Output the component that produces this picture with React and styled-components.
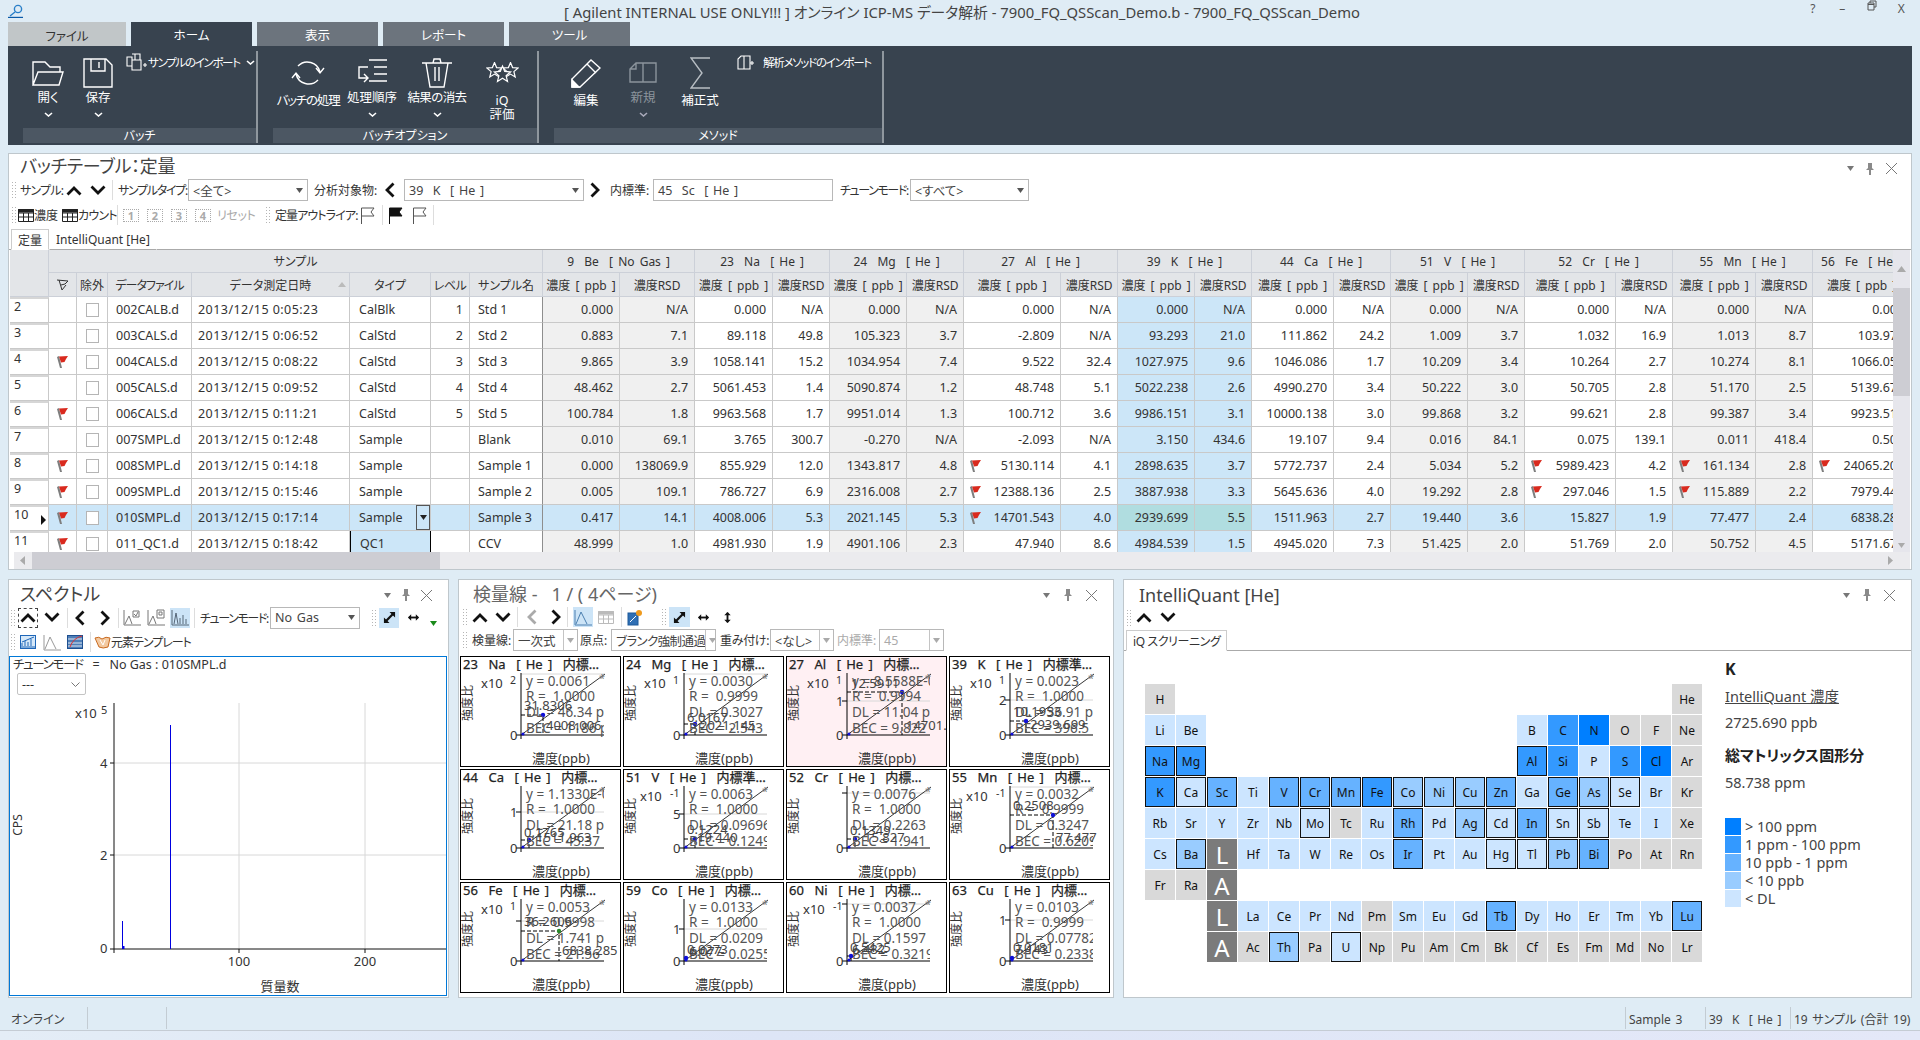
import React from 'react';
import styled, { createGlobalStyle } from 'styled-components';

const Global = createGlobalStyle`
  html, body { margin: 0; padding: 0; background: #dfecf5; }
  * { box-sizing: border-box; }
  body { font-family: "Noto Sans", "Noto Sans CJK JP", sans-serif; font-size: 12.5px; color: #333; font-feature-settings: "palt"; }
`;

const Page = styled.div`
  width: 1920px; height: 1040px; overflow: hidden; display: flex; flex-direction: column; background: #dfecf5;
`;

/* ---------- title bar ---------- */
const TitleBar = styled.div`
  height: 22px; display: grid; grid-template-columns: 1fr auto 1fr; align-items: center; padding: 1px 4px 0 8px;
`;
const TitleText = styled.div` font-size: 14.8px; color: #444; white-space: pre; `;
const WinControls = styled.div` display: flex; justify-content: flex-end; margin-top: -6px; `;
const WinBtn = styled.span` width: 29.5px; text-align: center; font-size: 12px; color: #555; `;

/* ---------- ribbon ---------- */
const TabRow = styled.div` height: 24px; display: flex; gap: 5px; padding-left: 8px; `;
const RibbonTab = styled.div`
  width: ${p => p.$w}px; display: flex; align-items: center; justify-content: center; font-size: 12.5px;
  padding-top: ${p => p.$file ? 3 : 0}px;
  background: ${p => p.$file ? '#c1c6c8' : p.$active ? '#38434f' : '#6c747d'};
  color: ${p => p.$file ? '#333' : '#fff'};
`;
const Ribbon = styled.div` height: 99px; margin: 0 8px; background: #38434f; display: flex; padding-top: 5px; `;
const RibbonGroup = styled.div`
  width: ${p => p.$w}px; margin-left: ${p => p.$ml}px; display: flex; flex-direction: column; height: 92px;
  border-right: 2px solid #8f979e; flex: none;
`;
const RibbonItems = styled.div` flex: 1; display: flex; `;
const RibbonLabel = styled.div`
  height: 15px; background: #4c5763; color: #fff; font-size: 12px; line-height: 15px; text-align: center;
`;
const RibbonBtn = styled.div`
  width: ${p => p.$w}px; flex: none; display: flex; flex-direction: column; align-items: center;
  color: ${p => p.$off ? '#8d959d' : '#fff'}; font-size: 12.5px; line-height: 14px; white-space: nowrap;
  letter-spacing: ${p => p.$k || 0}px;
`;
const IconSlot = styled.div` height: 33px; margin-top: 5px; display: flex; align-items: center; justify-content: center; flex: none; `;
const BtnText = styled.div` margin-top: ${p => p.$mt ?? 2}px; text-align: center; `;
const SmallBtn = styled.div`
  display: flex; align-items: center; gap: ${p => p.$gap || 0}px; color: #fff; font-size: 11.5px; height: 18px; flex: none;
  margin: 2px 0 0 ${p => p.$ml || 0}px; white-space: nowrap; letter-spacing: -1.3px;
`;
const Svg = styled.svg`
  display: block; flex: none; fill: none; stroke: ${p => p.$c || '#fff'}; stroke-width: ${p => p.$sw || 1.4}; margin-top: ${p => p.$mt || 0}px;
`;

const Chev = ({ mt = 5, ml = 0, c = '#fff' }) => (
  <Svg width="9" height="5" viewBox="0 0 9 5" $sw={1.6} $c={c} $mt={mt} style={{ marginLeft: ml }}><path d="M1 1 L4.5 4 L8 1" /></Svg>
);
const starPts = (cx, cy, r) => {
  const p = [];
  for (let i = 0; i < 10; i++) {
    const rr = i % 2 ? r * 0.45 : r;
    const a = -Math.PI / 2 + i * Math.PI / 5;
    p.push(`${(cx + rr * Math.cos(a)).toFixed(1)},${(cy + rr * Math.sin(a)).toFixed(1)}`);
  }
  return p.join(' ');
};
const Folder = () => <Svg width="32" height="26" viewBox="0 0 32 26"><path d="M1 25 V2 H13 L18 7 H28 V12 M1 25 L6 12 H31 L27 25 Z" /></Svg>;
const Floppy = () => <Svg width="30" height="30" viewBox="0 0 30 30"><path d="M1 1 H23 L29 7 V29 H1 Z M8 1 V13 H22 V1 M16 4 V10" /></Svg>;
const Sync = () => <Svg width="34" height="30" viewBox="0 0 34 30"><path d="M7 8 A13 13 0 0 1 29 14 M25 10 L29 15 L33 10 M27 22 A13 13 0 0 1 5 16 M1 20 L5 15 L9 20" /></Svg>;
const ListIcon = () => <Svg width="31" height="28" viewBox="0 0 31 28"><path d="M12 1 H30 M17 8 H30 M17 15 H30 M12 22 H30 M11 8 H2 V19 H11 M7 15 L11 19 L7 23" /></Svg>;
const Trash = () => <Svg width="30" height="30" viewBox="0 0 30 30"><path d="M0 5 H30 M11 5 L12 1 H18 L19 5 M4 5 L8 29 H22 L26 5 M13 9 V23 M17 9 V23" /></Svg>;
const Stars = () => <Svg width="33" height="22" viewBox="0 0 33 22" $sw={1.2}><polygon points={starPts(8.5, 8.5, 8)} /><polygon points={starPts(24.5, 8.5, 8)} /><polygon points={starPts(16.5, 12.5, 8.5)} fill="#38434f" /></Svg>;
const Pencil = () => <Svg width="30" height="30" viewBox="0 0 30 30"><path d="M1 29 V21 L20 2 L29 10 L9 29 Z M16 6 L25 15" /><path d="M1 29 V22 L8 29 Z" fill="#fff" /></Svg>;
const NewIcon = () => <Svg width="28" height="21" viewBox="0 0 28 21" $c="#8b949c"><path d="M1 20 V7 L7 1 H27 V20 Z M14 1 V20 M1 7 H7 V1" /></Svg>;
const Sigma = () => <Svg width="20" height="32" viewBox="0 0 20 32" $c="#b8bec4"><path d="M20 1 H1 L12 16 L1 31 H20" /></Svg>;
const ImportIcon = () => <Svg width="22" height="18" viewBox="0 0 22 18" $sw={1.1}><path d="M1 4 H6 V13 H1 Z M6 1 H14 V7 H6 M6 7 H15 V17 H6 Z M9 1 V7 M17 12 H21 M19 10 V14" /></Svg>;
const DocPlus = () => <Svg width="18" height="15" viewBox="0 0 18 15" $sw={1.1}><path d="M1 14 V4 L4 1 H13 V14 Z M7 1 V14 M13 8 H17 M15 6 V10" /></Svg>;

/* ---------- panels ---------- */
const Panel = styled.section`
  background: #fff; border: 1px solid #bfc7cc; display: flex; flex-direction: column; position: relative;
  width: ${p => p.$w ? `${p.$w}px` : 'auto'}; height: 419px; flex: ${p => p.$w ? 'none' : '1'};
  margin: ${p => p.$mx ? `${p.$mt || 0}px ${p.$mx}px 0` : 0};
`;
const PanelTop = styled.div` height: ${p => p.$h}px; display: flex; align-items: center; justify-content: space-between; flex: none; `;
const PanelTitle = styled.div`
  font-size: 18px; color: ${p => p.$c || '#444'}; padding-left: ${p => p.$pl}px; white-space: pre; margin-top: ${p => p.$mt || 0}px;
  letter-spacing: ${p => p.$k || 0}px;
`;
const PanelCtrls = styled.div` display: flex; align-items: center; gap: ${p => p.$gap || 13}px; padding-right: ${p => p.$pr}px; margin-top: ${p => p.$mt || 0}px; `;
const Controls = ({ pr, gap, mt }) => (
  <PanelCtrls $pr={pr} $gap={gap} $mt={mt}>
    <Svg width="7" height="5" viewBox="0 0 7 5" $c="none"><path d="M0 0 H7 L3.5 5 Z" fill="#777" /></Svg>
    <Svg width="8" height="12" viewBox="0 0 8 12" $c="none"><path d="M2 0 H6 V5 L8 7 H5 V12 H3 V7 H0 L2 5 Z" fill="#8a8a8a" /></Svg>
    <Svg width="11" height="11" viewBox="0 0 11 11" $c="#777" $sw={1}><path d="M0 0 L11 11 M11 0 L0 11" /></Svg>
  </PanelCtrls>
);

/* ---------- toolbars ---------- */
const Toolbar = styled.div`
  height: ${p => p.$h}px; display: flex; align-items: center; padding-left: ${p => p.$pl ?? 2}px; flex: none;
`;
const Grip = styled.div`
  width: 6px; height: 18px; flex: none; margin-left: ${p => p.$ml || 0}px;
  background-image: radial-gradient(#b5b5b5 0.9px, transparent 1px); background-size: 3px 3px;
`;
const ToolLabel = styled.div`
  width: ${p => p.$w}px; margin-left: ${p => p.$ml || 0}px; white-space: nowrap; font-size: 12px; flex: none;
  color: ${p => p.$off ? '#aaa' : '#333'}; letter-spacing: ${p => p.$k || 0}px;
`;
const ToolBtn = styled.div`
  width: ${p => p.$w}px; height: ${p => p.$h || 20}px; margin-left: ${p => p.$ml || 0}px; flex: none;
  display: flex; align-items: ${p => p.$low ? 'flex-end' : 'center'}; justify-content: center;
  padding-bottom: ${p => p.$low ? 2 : 0}px;
  background: ${p => p.$on ? '#cce4f7' : 'transparent'};
  border: ${p => p.$dash ? '1px dashed #444' : 'none'};
`;
const ToolSep = styled.div` width: 1px; height: 20px; background: #ddd; flex: none; margin-left: ${p => p.$ml}px; `;
const Combo = styled.div`
  width: ${p => p.$w}px; height: 22px; margin-left: ${p => p.$ml || 0}px; flex: none; word-spacing: 1.5px; letter-spacing: ${p => p.$k || 0}px;
  border: 1px solid #b8b8b8; background: #fff; display: flex; align-items: center; padding-left: 4px;
  font-size: 12.5px; white-space: pre; color: ${p => p.$off ? '#aaa' : '#444'}; position: relative; overflow: hidden;
`;
const ComboArrow = styled.span`
  margin-left: auto; width: ${p => p.$split ? 14 : 16}px; height: 100%; display: flex; align-items: center; justify-content: center; flex: none;
  border-left: ${p => p.$split ? '1px solid #c4c4c4' : 'none'};
`;
const Tri = ({ c = '#555' }) => <Svg width="7" height="5" viewBox="0 0 7 5" $c="none"><path d="M0 0 H7 L3.5 5 Z" fill={c} /></Svg>;
const Up = ({ c = '#111' }) => <Svg width="16" height="11" viewBox="0 0 16 11" $c={c} $sw={2.8}><path d="M1.5 9.5 L8 3 L14.5 9.5" /></Svg>;
const Down = ({ c = '#111' }) => <Svg width="16" height="11" viewBox="0 0 16 11" $c={c} $sw={2.8}><path d="M1.5 1.5 L8 8 L14.5 1.5" /></Svg>;
const Left = ({ c = '#111' }) => <Svg width="11" height="16" viewBox="0 0 11 16" $c={c} $sw={2.8}><path d="M9.5 1.5 L3 8 L9.5 14.5" /></Svg>;
const Right = ({ c = '#111' }) => <Svg width="11" height="16" viewBox="0 0 11 16" $c={c} $sw={2.8}><path d="M1.5 1.5 L8 8 L1.5 14.5" /></Svg>;
const GridIcon = ({ c = '#222' }) => <Svg width="16" height="13" viewBox="0 0 16 13" $c={c} $sw={1}><path d="M.5 .5 H15.5 V12.5 H.5 Z M.5 4 H15.5 M.5 8 H15.5 M5.5 4 V12.5 M10.5 4 V12.5" /><path d="M.5 .5 H15.5 V3 H.5 Z" fill={c} /></Svg>;
const NumBox = styled.div`
  width: 16px; height: 13px; border: 1px dotted #aaa; font-size: 11px; color: #aaa; font-weight: 700;
  display: flex; align-items: center; justify-content: center; line-height: 1;
`;
const NumIcon = ({ n }) => <NumBox>{n}</NumBox>;
const FlagOutline = ({ fill, c = '#555' }) => (
  <Svg width="16" height="18" viewBox="0 0 16 18" $c={c} $sw={1}><path d="M1.5 18 V2 H14 L11 6 L14 10 H1.5" fill={fill || 'none'} /></Svg>
);
const Updown = ({ dir }) => (
  <Svg width="13" height="13" viewBox="0 0 14 14" $c="#111" $sw={2} transform={dir === 'v' ? 'rotate(90)' : undefined}>
    <path d="M2 7 H12" /><path d="M4.5 3.5 L1 7 L4.5 10.5 Z M9.5 3.5 L13 7 L9.5 10.5 Z" fill="#111" stroke="none" />
  </Svg>
);
const Diag = () => (
  <Svg width="13" height="13" viewBox="0 0 14 14" $c="#111" $sw={2.4}>
    <path d="M3 11 L11 3" /><path d="M7 1 H13 V7 Z M1 7 V13 H7 Z" fill="#111" stroke="none" />
  </Svg>
);
const ChartGlyph = ({ variant, c = '#777' }) => (
  <Svg width="18" height="17" viewBox="0 0 18 17" $c={c} $sw={1}>
    <path d="M1 1 V16 H18" />
    {variant === 'a' && <path d="M2 15 L6 7 L9 15 M10 2 H16 V8 H10 Z M11 5 L13 7 L15 3" />}
    {variant === 'b' && <path d="M2 15 L6 7 L9 15 M10 1 H17 V9 H10 Z M12 3 H15 V6 H12 Z" />}
    {variant === 'c' && <path d="M3 15 L5 4 L7 15 M9 15 V9 M12 15 V6 M15 15 V10" />}
    {variant === 'd' && <path d="M2 15 L7 3 L13 15" />}
  </Svg>
);

/* ---------- tabs inside panels ---------- */
const InnerTabs = styled.div`
  height: ${p => p.$h || 21}px; display: flex; align-items: flex-end; padding-left: ${p => p.$pl}px; border-bottom: 1px solid #aaa; flex: none;
`;
const InnerTab = styled.div`
  height: 21px; padding: 0 ${p => p.$px ?? 7}px; display: flex; align-items: center; font-size: 12px; color: #333; white-space: nowrap;
  margin-bottom: -1px; background: #fff; letter-spacing: ${p => p.$k || 0}px;
  border: ${p => p.$active ? '1px solid #ccc' : '1px solid transparent'}; border-bottom: ${p => p.$active ? '1px solid #fff' : '1px solid #aaa'};
`;

/* ---------- batch table ---------- */
const TableArea = styled.div` height: 302px; display: flex; flex: none; padding-left: 1px; `;
const TableClip = styled.div` width: 1883px; height: 302px; overflow: hidden; flex: none; `;
const Grid = styled.table`
  border-collapse: separate; border-spacing: 0; table-layout: fixed; width: 1901px; font-size: 12.5px; color: #333;
`;
const Th = styled.th`
  background: #e3e5e8; border-right: 1px solid #ccd0d8; border-bottom: 1px solid #ccd0d8; font-weight: 400; font-size: 12px;
  height: ${p => p.$h}px; padding: 0; white-space: pre; overflow: hidden; position: relative; color: #333; word-spacing: 2px;
  letter-spacing: ${p => p.$k || 0}px;
`;
const SortMark = styled.span`
  position: absolute; right: 3px; top: 9px; width: 0; height: 0;
  border-left: 4px solid transparent; border-right: 4px solid transparent; border-bottom: 5px solid #bbb;
`;
const Td = styled.td`
  height: 26px; padding: 0 ${p => p.$pr ?? 6}px 0 ${p => p.$pl ?? 6}px; text-align: ${p => p.$r ? 'right' : 'left'};
  background: ${p => p.$bg || '#fff'}; white-space: nowrap; overflow: hidden;
  border-right: 1px solid ${p => p.$edge || '#c9c9c9'}; border-bottom: 1px solid #c9c9c9;
  border-left: ${p => p.$focus ? '1px solid #000' : 'none'};
  ${p => p.$focus ? 'border-right: 1px solid #000;' : ''}
  letter-spacing: ${p => p.$ls || 0}px; position: relative;
`;
const RowHead = styled.td`
  height: 26px; background: #fff; padding: 0 0 0 4px; vertical-align: top; font-size: 12.5px; border-top: 2px solid #d6d6d6;
  border-right: 1px solid #c9c9c9; border-bottom: 1px solid #c9c9c9; position: relative; line-height: 15px;
`;
const RowPointer = styled.span`
  position: absolute; right: 2px; top: 8px; width: 0; height: 0;
  border-top: 5px solid transparent; border-bottom: 5px solid transparent; border-left: 5px solid #111;
`;
const CheckBox = styled.div` width: 13px; height: 14px; border: 1px solid #b5b5b5; background: #fff; margin: 0 auto; `;
const ValueRow = styled.div` display: flex; align-items: center; justify-content: space-between; `;
const DropBtn = styled.span`
  position: absolute; right: 0; top: 0; bottom: 0; width: 14px; border: 1px solid #555; background: #cce6f8;
  display: flex; align-items: center; justify-content: center;
`;
const CenterCell = styled.div` display: flex; justify-content: center; `;
const FlagIcon = () => (
  <Svg width="13" height="14" viewBox="0 0 13 14" $c="none">
    <path d="M1 2 L3 1 L6 13 L4 13 Z" fill="#7e7e7e" />
    <path d="M3 1.5 L12 1 L10 4 L8.5 7 L5 7.5 Z" fill="#d92a1e" />
  </Svg>
);
const VScroll = styled.div` width: 17px; height: 302px; background: #e6e6ec; display: flex; flex-direction: column; align-items: center; flex: none; `;
const ScrollArrow = styled.div`
  height: ${p => p.$h}px; width: ${p => p.$w ? `${p.$w}px` : '100%'}; display: flex; flex: ${p => p.$w ? 'none' : '1'};
  align-items: ${p => p.$end ? 'flex-end' : 'center'}; justify-content: ${p => p.$right ? 'flex-end' : 'center'};
  padding-bottom: ${p => p.$end ? 4 : 0}px; padding-right: ${p => p.$right ? 17 : 0}px;
`;
const VThumb = styled.div` width: 100%; height: 108px; background: #cdcdd3; flex: none; `;
const HScroll = styled.div` height: 17px; margin-left: 5px; margin-right: 1px; background: #ebebee; display: flex; align-items: center; flex: none; `;
const HThumb = styled.div` width: 408px; height: 100%; background: #cdcdd3; flex: none; margin-left: 1px; `;

const samples = [
  [2, 0, '002CALB.d', '0:05:23', 'CalBlk', 1, 'Std 1'],
  [3, 0, '003CALS.d', '0:06:52', 'CalStd', 2, 'Std 2'],
  [4, 1, '004CALS.d', '0:08:22', 'CalStd', 3, 'Std 3'],
  [5, 0, '005CALS.d', '0:09:52', 'CalStd', 4, 'Std 4'],
  [6, 1, '006CALS.d', '0:11:21', 'CalStd', 5, 'Std 5'],
  [7, 0, '007SMPL.d', '0:12:48', 'Sample', '', 'Blank'],
  [8, 1, '008SMPL.d', '0:14:18', 'Sample', '', 'Sample 1'],
  [9, 1, '009SMPL.d', '0:15:46', 'Sample', '', 'Sample 2'],
  [10, 1, '010SMPL.d', '0:17:14', 'Sample', '', 'Sample 3'],
  [11, 1, '011_QC1.d', '0:18:42', 'QC1', '', 'CCV'],
];
const analytes = [
  { name: '9  Be  [ No Gas ]', tone: 'g', w: [77, 75], vals: ['0.000 N/A', '0.883 7.1', '9.865 3.9', '48.462 2.7', '100.784 1.8', '0.010 69.1', '0.000 138069.9', '0.005 109.1', '0.417 14.1', '48.999 1.0'] },
  { name: '23  Na  [ He ]', tone: 'w', w: [78, 57], vals: ['0.000 N/A', '89.118 49.8', '1058.141 15.2', '5061.453 1.4', '9963.568 1.7', '3.765 300.7', '855.929 12.0', '786.727 6.9', '4008.006 5.3', '4981.930 1.9'] },
  { name: '24  Mg  [ He ]', tone: 'g', w: [77, 57], vals: ['0.000 N/A', '105.323 3.7', '1034.954 7.4', '5090.874 1.2', '9951.014 1.3', '-0.270 N/A', '1343.817 4.8', '2316.008 2.7', '2021.145 5.3', '4901.106 2.3'] },
  { name: '27  Al  [ He ]', tone: 'w', w: [97, 57], vals: ['0.000 N/A', '-2.809 N/A', '9.522 32.4', '48.748 5.1', '100.712 3.6', '-2.093 N/A', '!5130.114 4.1', '!12388.136 2.5', '!14701.543 4.0', '47.940 8.6'] },
  { name: '39  K  [ He ]', tone: 's', w: [77, 57], vals: ['0.000 N/A', '93.293 21.0', '1027.975 9.6', '5022.238 2.6', '9986.151 3.1', '3.150 434.6', '2898.635 3.7', '3887.938 3.3', '2939.699 5.5', '4984.539 1.5'] },
  { name: '44  Ca  [ He ]', tone: 'w', w: [82, 57], vals: ['0.000 N/A', '111.862 24.2', '1046.086 1.7', '4990.270 3.4', '10000.138 3.0', '19.107 9.4', '5772.737 2.4', '5645.636 4.0', '1511.963 2.7', '4945.020 7.3'] },
  { name: '51  V  [ He ]', tone: 'g', w: [77, 57], vals: ['0.000 N/A', '1.009 3.7', '10.209 3.4', '50.222 3.0', '99.868 3.2', '0.016 84.1', '5.034 5.2', '19.292 2.8', '19.440 3.6', '51.425 2.0'] },
  { name: '52  Cr  [ He ]', tone: 'w', w: [91, 57], vals: ['0.000 N/A', '1.032 16.9', '10.264 2.7', '50.705 2.8', '99.621 2.8', '0.075 139.1', '!5989.423 4.2', '!297.046 1.5', '15.827 1.9', '51.769 2.0'] },
  { name: '55  Mn  [ He ]', tone: 'g', w: [83, 57], vals: ['0.000 N/A', '1.013 8.7', '10.274 8.1', '51.170 2.5', '99.387 3.4', '0.011 418.4', '!161.134 2.8', '!115.889 2.2', '77.477 2.4', '50.752 4.5'] },
  { name: '56  Fe  [ He ]', tone: 'w', w: [98], vals: ['0.000', '103.971', '1066.053', '5139.671', '9923.512', '0.506', '!24065.203', '7979.442', '6838.285', '5171.671'] },
];
const SEL = '#cce6f8';
const cellBg = (tone, rowIdx) => {
  if (rowIdx === 8) return tone === 's' ? '#b0dde0' : SEL;
  return tone === 'g' ? '#f0f0f0' : tone === 's' ? SEL : '#fff';
};

const BatchTable = () => (
  <Grid>
    <colgroup>
      {[39, 28, 31, 84, 158, 81, 39, 73].map((w, i) => <col key={i} style={{ width: w }} />)}
      {analytes.flatMap(a => a.w).map((w, i) => <col key={`a${i}`} style={{ width: w }} />)}
    </colgroup>
    <thead>
      <tr>
        <Th $h={23} rowSpan={2} />
        <Th $h={23} colSpan={7}>サンプル</Th>
        {analytes.map(a => <Th key={a.name} $h={23} colSpan={a.w.length}>{a.name}</Th>)}
      </tr>
      <tr>
        <Th $h={24}><CenterCell><Svg width="13" height="12" viewBox="0 0 13 12" $c="#333" $sw={1}><path d="M1 1 L12 2 L9 5 L5 6 M3 1 L6 11 L10 6" /></Svg></CenterCell></Th>
        <Th $h={24}>除外</Th>
        <Th $h={24} $k={-1}>データファイル</Th>
        <Th $h={24}>データ測定日時<SortMark /></Th>
        <Th $h={24}>タイプ</Th>
        <Th $h={24} $k={-0.5}>レベル</Th>
        <Th $h={24}>サンプル名</Th>
        {analytes.flatMap(a => [
          <Th key={`${a.name}c`} $h={24}>濃度 [ ppb ]</Th>,
          a.w.length > 1 ? <Th key={`${a.name}r`} $h={24}>濃度RSD</Th> : null,
        ])}
      </tr>
    </thead>
    <tbody>
      {samples.map((s, r) => {
        const rowBg = r === 8 ? SEL : undefined;
        return (
          <tr key={s[0]}>
            <RowHead>{s[0]}{r === 8 && <RowPointer />}</RowHead>
            <Td $bg={rowBg} $pl={7} $pr={0}>{s[1] ? <FlagIcon /> : null}</Td>
            <Td $bg={rowBg} $pl={0} $pr={0}><CheckBox /></Td>
            <Td $bg={rowBg} $pl={8} $pr={0}>{s[2]}</Td>
            <Td $bg={rowBg} $pl={6} $pr={0} $ls={0.45}>2013/12/15 {s[3]}</Td>
            <Td $bg={r === 8 || r === 9 ? SEL : undefined} $pl={9} $focus={r === 9}>
              {s[4]}{r === 8 && <DropBtn><Tri c="#222" /></DropBtn>}
            </Td>
            <Td $bg={rowBg} $r>{s[5]}</Td>
            <Td $bg={rowBg} $pl={8} $pr={0} $edge="#8e8e8e">{s[6]}</Td>
            {analytes.flatMap(a => {
              const raw = a.vals[r];
              const flag = raw[0] === '!';
              const [v, rsd] = (flag ? raw.slice(1) : raw).split(' ');
              const bg = cellBg(a.tone, r);
              return [
                <Td key={`${a.name}c`} $bg={bg} $r $pl={5}>
                  {flag ? <ValueRow><FlagIcon /><span>{v}</span></ValueRow> : v}
                </Td>,
                rsd ? <Td key={`${a.name}r`} $bg={bg} $r $pl={0}>{rsd}</Td> : null,
              ];
            })}
          </tr>
        );
      })}
    </tbody>
  </Grid>
);

/* ---------- bottom ---------- */
const BottomRow = styled.div` display: flex; gap: 9px; padding: 0 8px; margin-top: 9px; flex: none; `;
const SpectrumFrame = styled.div`
  height: 340px; margin-top: 2px; border: 1px solid #0078d7; display: flex; flex-direction: column; flex: none; width: 438px;
`;
const SpecInfo = styled.div` height: 16px; line-height: 15px; padding-left: 3px; font-size: 12.5px; color: #333; white-space: pre; flex: none; `;
const Tight = styled.span` letter-spacing: ${p => p.$k}px; `;
const SpecSelect = styled.div`
  width: 69px; height: 22px; margin-left: 7px; border: 1px solid #c4c4c4; border-radius: 2px; display: flex; align-items: center;
  justify-content: space-between; padding: 0 5px 0 4px; font-size: 12.5px; background: #fff; flex: none;
`;
const PlotSvg = styled.svg`
  display: block; flex: none; font-family: "Noto Sans", "Noto Sans CJK JP", sans-serif; font-feature-settings: "palt";
  text { white-space: pre; }
`;

const SpectrumPlot = () => (
  <PlotSvg width="436" height="300" viewBox="9 697 436 300">
    {[765, 857].map(y => <line key={y} x1="113" x2="445" y1={y} y2={y} stroke="#d8d8d8" />)}
    {[238, 364].map(x => <line key={x} x1={x} x2={x} y1="705" y2="951" stroke="#d8d8d8" />)}
    <path d="M113 705 V951 H445 M113 951 V955 M238 951 V955 M364 951 V955 M109 765 H113 M109 857 H113 M109 951 H113" stroke="#111" strokeWidth="1" fill="none" />
    <path d="M169.5 727 V951 M121.5 923 V951" stroke="#0000e0" strokeWidth="1" />
    <path d="M122.5 948 V951" stroke="#0000e0" strokeWidth="2" />
    <g fontSize="13" fill="#333">
      <text x="74" y="720">x10</text>
      <text x="100" y="716" fontSize="11">5</text>
      <text x="99" y="770">4</text>
      <text x="99" y="862">2</text>
      <text x="99" y="955">0</text>
      <text x="238" y="968" textAnchor="middle">100</text>
      <text x="364" y="968" textAnchor="middle">200</text>
      <text x="279" y="993" textAnchor="middle">質量数</text>
      <text transform="translate(21 827) rotate(-90)" textAnchor="middle" fontSize="12">CPS</text>
    </g>
  </PlotSvg>
);

const ChartsGrid = styled.div`
  display: grid; grid-template-columns: repeat(4, 161px); grid-auto-rows: 111px; gap: 2px; padding-left: 1px; margin-top: 5px; flex: none;
`;
const ChartCell = styled.div`
  border: 1px solid #000; background: ${p => p.$pink ? '#fff0f3' : '#fff'}; overflow: hidden; display: flex; flex-direction: column;
`;
const ChartTitle = styled.div`
  height: 16px; font-size: 13px; line-height: 15px; padding-left: 2px; color: #222; white-space: pre; flex: none; -webkit-text-stroke: 0.25px #222; overflow: hidden;
  word-spacing: 1.9px;
`;

const charts = [
  { t: '23  Na  [ He ]  内標…', ex: '2', s: ['y = 0.0061', 'R =  1.0000', 'DL = 46.34 ppb', 'BEC = 1186 ppb'], pt: [83, 59], l1: ['31.8306', 64, 54], l2: ['4008.006', 86, 74], ticks: [] , g: 18},
  { t: '24  Mg  [ He ]  内標…', ex: '1', s: ['y = 0.0030', 'R =  0.9999', 'DL = 0.3027 ppb', 'BEC = 2.543 ppb'], pt: [72, 68], l1: ['6.0167', 64, 66], l2: ['2021.145', 77, 74], ticks: [], g: 18 },
  { t: '27  Al  [ He ]  内標…', ex: '1', pink: true, s: ['y = 8.5588E-0', 'R =  0.9994', 'DL = 11.04 ppb', 'BEC = 9.822 ppb'], pt: [116, 36], l1: ['12.5911', 65, 32], l2: ['14701.5', 120, 74], ticks: [['1', 45]], g: 45 },
  { t: '39  K  [ He ]  内標準…', ex: '1', s: ['y = 0.0023', 'R =  1.0000', 'DL = 36.91 ppb', 'BEC = 396.5 ppb'], pt: [77, 65], l1: ['10.1953', 64, 60], l2: ['2939.699', 81, 73], ticks: [['2', 44]], g: 44 },
  { t: '44  Ca  [ He ]  内標…', s: ['y = 1.1330E-0', 'R =  1.0000', 'DL = 21.18 ppb', 'BEC = 45.37 ppb'], pt: [69, 71], l1: ['0.1765', 64, 68], l2: ['1511.963', 76, 73], ticks: [['1', 43]], g: 43 },
  { t: '51  V  [ He ]  内標準…', ex: '-1', xx: 17, s: ['y = 0.0063', 'R =  1.0000', 'DL = 0.09696 ppb', 'BEC = 0.1249 ppb'], pt: [72, 70], l1: ['0.1224', 64, 65], l2: ['19.440', 74, 73], ticks: [['5', 45]], g: 45 },
  { t: '52  Cr  [ He ]  内標…', s: ['y = 0.0076', 'R =  1.0000', 'DL = 0.2263 ppb', 'BEC = 1.941 ppb'], pt: [69, 70], l1: ['0.1349', 64, 66], l2: ['15.827', 78, 73], ticks: [['', 24]], g: 24 },
  { t: '55  Mn  [ He ]  内標…', ex: '-1', xx: 17, s: ['y = 0.0032', 'R =  0.9999', 'DL = 0.3247 ppb', 'BEC = 0.6209 ppb'], pt: [104, 46], l1: ['0.2508', 64, 41], l2: ['77.477', 107, 73], ticks: [], g: 18 },
  { t: '56  Fe  [ He ]  内標…', ex: '1', green: true, s: ['y = 0.0053', 'R =  0.9998', 'DL = 1.741 ppb', 'BEC = 21.56 ppb'], pt: [99, 49], l1: ['36.2606', 64, 44], l2: ['6838.285', 102, 73], ticks: [['', 39]], g: 39 },
  { t: '59  Co  [ He ]  内標…', s: ['y = 0.0133', 'R =  1.0000', 'DL = 0.0209', 'BEC = 0.0255 ppb'], pt: [63, 76], l1: ['0.0273', 64, 72], l2: ['6.077', 66, 74], ticks: [['1', 47]], g: 47 },
  { t: '60  Ni  [ He ]  内標…', ex: '-1', xx: 17, s: ['y = 0.0037', 'R =  1.0000', 'DL = 0.1597', 'BEC = 0.3219 ppb'], pt: [65, 74], l1: ['0.5425', 64, 70], l2: ['6.482', 66, 72], ticks: [['', 22]], g: 22 },
  { t: '63  Cu  [ He ]  内標…', s: ['y = 0.0103', 'R =  0.9999', 'DL = 0.07782 ppb', 'BEC = 0.2338 ppb'], pt: [63, 76], l1: ['0.0181', 64, 70], l2: ['7.143', 66, 72], ticks: [['1', 38]], g: 38 },
];

const MiniChart = ({ c, i }) => {
  const [px, py] = c.pt;
  return (
    <PlotSvg width="159" height="93" viewBox="1 17 159 93">
      <defs><clipPath id={`clip${i}`}><rect x="61" y="16" width="83" height="65" /></clipPath></defs>
      <line x1="61" x2="144" y1={c.g} y2={c.g} stroke="#d8d8d8" />
      <path d="M61 16 V79 H144" fill="none" stroke="#000" />
      <path d="M61 79 V83 M56 79 H61" stroke="#000" fill="none" />
      <line x1="61" y1="79" x2="145" y2="18" stroke="#000" strokeWidth="0.8" />
      <path d={`M61 ${py} H${px} V79`} fill="none" stroke="#000" strokeDasharray="4 2" />
      <circle cx={px} cy={py} r="2.2" fill={c.green ? '#2a8a2a' : '#1010d8'} />
      <circle cx="63" cy="78" r="1.6" fill="#1010d8" />
      <text x="139" y="26" fontSize="11" fill="#777">*</text>
      <g fontSize="13.5" fill="#555" clipPath={`url(#clip${i})`}>
        <text x="66" y="30">{c.s[0]}</text>
        <text x="66" y="45">{c.s[1]}</text>
        <text x="66" y="61">{c.s[2]}</text>
        <text x="66" y="77">{c.s[3]}</text>
      </g>
      <text x={c.l1[1]} y={c.l1[2]} fontSize="13" fill="#444">{c.l1[0]}</text>
      <text x={c.l2[1]} y={c.l2[2]} fontSize="13" fill="#444">{c.l2[0]}</text>
      <g fontSize="13" fill="#333">
        {c.ex && <text x={c.xx || 21} y="32">x10</text>}
        {c.ex && <text x={c.ex.length > 1 ? 47 : 50} y="28" fontSize="10.5">{c.ex}</text>}
        <text x="50" y="84">0</text>
        {c.ticks.map(([t, y]) => <g key={y}><text x="50" y={y + 5}>{t}</text><line x1="56" x2="61" y1={y} y2={y} stroke="#000" /></g>)}
        <text transform="translate(12 47) rotate(-90)" textAnchor="middle" fontSize="12">強度比</text>
        <text x="101" y="107" textAnchor="middle">濃度(ppb)</text>
      </g>
    </PlotSvg>
  );
};

/* periodic table */
const PTBody = styled.div` display: flex; flex: 1; padding: 0 0 0 21px; `;
const PTGrid = styled.div`
  display: grid; grid-template-columns: repeat(18, 30px); grid-auto-rows: 30px; gap: 1px; margin-top: 33px; flex: none; align-content: start;
`;
const Elem = styled.div`
  background: ${p => p.$bg}; display: flex; align-items: center; justify-content: center; font-size: 12px; color: #111;
  border: ${p => p.$b ? '1px solid #111' : 'none'};
`;
const Series = styled.div`
  background: #7b7b7b; color: #fff; font-size: 24px; display: flex; align-items: center; justify-content: center;
`;
const Side = styled.div` margin-left: 23px; display: flex; flex-direction: column; flex: none; `;
const SideHead = styled.div` font-size: ${p => p.$fs || 15}px; font-weight: 700; line-height: 20px; margin-top: ${p => p.$mt}px; color: #222; `;
const SideText = styled.div`
  font-size: 14.5px; line-height: 18px; margin-top: ${p => p.$mt}px; color: #444; text-decoration: ${p => p.$u ? 'underline' : 'none'};
`;
const Legend = styled.div` margin-top: 26px; display: flex; flex-direction: column; `;
const LegendRow = styled.div` display: flex; align-items: center; height: 18px; font-size: 14.5px; color: #444; gap: 4px; `;
const Swatch = styled.div` width: 16px; height: 17px; background: ${p => p.$bg}; `;

const C = { a: '#007fff', b: '#3399ff', c: '#66b2ff', d: '#99ccff', e: '#cce5ff', x: '#d9d9d9' };
/* each token: Symbol:color[+ for border]; "." empty; "#L"/"#A" dark tiles */
const ptRows = [
  'H:x . . . . . . . . . . . . . . . . He:x',
  'Li:e Be:e . . . . . . . . . . B:e C:b N:a O:x F:x Ne:x',
  'Na:b+ Mg:b+ . . . . . . . . . . Al:b+ Si:b P:e S:b Cl:a Ar:x',
  'K:b+ Ca:e+ Sc:c+ Ti:e V:c+ Cr:c+ Mn:c+ Fe:b+ Co:d+ Ni:d+ Cu:d+ Zn:c+ Ga:e Ge:c+ As:d+ Se:e+ Br:e Kr:x',
  'Rb:e Sr:e Y:e Zr:e Nb:e Mo:e+ Tc:x Ru:e Rh:c+ Pd:e Ag:d+ Cd:e+ In:c+ Sn:e+ Sb:e+ Te:e I:e Xe:x',
  'Cs:e Ba:d+ #L Hf:e Ta:e W:e Re:e Os:e Ir:c+ Pt:e Au:e Hg:e+ Tl:e+ Pb:d+ Bi:c+ Po:x At:x Rn:x',
  'Fr:x Ra:x #A . . . . . . . . . . . . . . .',
  '. . #L La:e Ce:e Pr:e Nd:e Pm:x Sm:e Eu:e Gd:e Tb:c+ Dy:e Ho:e Er:e Tm:e Yb:e Lu:c+',
  '. . #A Ac:x Th:d+ Pa:x U:e+ Np:x Pu:x Am:x Cm:x Bk:x Cf:x Es:x Fm:x Md:x No:x Lr:x',
];
const PeriodicTable = () => (
  <PTGrid>
    {ptRows.flatMap((row, r) => row.split(' ').map((tok, i) => {
      const key = `${r}-${i}`;
      if (tok === '.') return <div key={key} />;
      if (tok[0] === '#') return <Series key={key}>{tok[1]}</Series>;
      const [sym, col] = tok.split(':');
      return <Elem key={key} $bg={C[col[0]]} $b={col[1] === '+'}>{sym}</Elem>;
    }))}
  </PTGrid>
);

/* status bar */
const StatusBar = styled.div` height: 32px; display: flex; align-items: center; flex: none; padding-top: 8px; `;
const StatusCell = styled.div`
  width: ${p => p.$w}px; height: 22px; line-height: 26px; padding-left: ${p => p.$pl ?? 3}px; font-size: 12px; color: #444; white-space: pre; word-spacing: 1.5px;
  border-right: ${p => p.$sep ? '1px solid #c3ccd3' : 'none'}; flex: none; margin-left: ${p => p.$ml || 0}px;
  border-left: ${p => p.$sl ? '1px solid #c3ccd3' : 'none'};
`;
const BottomStrip = styled.div`
  flex: 1; border-top: 1px solid #c5ccd4; background: linear-gradient(90deg, #e4edf6 0%, #dde5f6 40%, #e4e8f8 100%);
`;

const ToolRowTable = () => (
  <>
    <Toolbar $h={22}>
      <Grip />
      <ToolLabel $w={42} $ml={3} $k={-0.8}>サンプル:</ToolLabel>
      <ToolBtn $w={24}><Up /></ToolBtn>
      <ToolBtn $w={24}><Down /></ToolBtn>
      <ToolSep $ml={2} />
      <ToolLabel $w={67} $ml={5} $k={-1.3}>サンプルタイプ:</ToolLabel>
      <Combo $w={120} $ml={3}>{'<全て>'}<ComboArrow><Tri /></ComboArrow></Combo>
      <ToolLabel $w={64} $ml={6}>分析対象物:</ToolLabel>
      <ToolBtn $w={22}><Left /></ToolBtn>
      <Combo $w={180} $ml={4}>{'39  K  [ He ]'}<ComboArrow><Tri /></ComboArrow></Combo>
      <ToolBtn $w={22}><Right /></ToolBtn>
      <ToolLabel $w={40} $ml={4}>内標準:</ToolLabel>
      <Combo $w={180} $ml={3}>{'45  Sc  [ He ]'}</Combo>
      <ToolLabel $w={68} $ml={7} $k={-1.4}>チューンモード:</ToolLabel>
      <Combo $w={119} $ml={2}>{'<すべて>'}<ComboArrow><Tri /></ComboArrow></Combo>
    </Toolbar>
    <Toolbar $h={28}>
      <Grip />
      <ToolBtn $w={16} $ml={1}><GridIcon /></ToolBtn>
      <ToolLabel $w={24}>濃度</ToolLabel>
      <ToolBtn $w={16} $ml={4}><GridIcon /></ToolBtn>
      <ToolLabel $w={35} $k={-0.8}>カウント</ToolLabel>
      <ToolSep $ml={4} />
      <ToolBtn $w={16} $ml={5}><NumIcon n="1" /></ToolBtn>
      <ToolBtn $w={16} $ml={8}><NumIcon n="2" /></ToolBtn>
      <ToolBtn $w={16} $ml={8}><NumIcon n="3" /></ToolBtn>
      <ToolBtn $w={16} $ml={8}><NumIcon n="4" /></ToolBtn>
      <ToolLabel $w={32} $ml={6} $off $k={-0.4}>リセット</ToolLabel>
      <Grip $ml={16} />
      <ToolLabel $w={80} $ml={4} $k={-0.9}>定量アウトライア:</ToolLabel>
      <ToolBtn $w={16} $ml={5}><FlagOutline /></ToolBtn>
      <ToolSep $ml={6} />
      <ToolBtn $w={16} $ml={5}><FlagOutline fill="#111" c="#111" /></ToolBtn>
      <ToolBtn $w={16} $ml={8}><FlagOutline /></ToolBtn>
      <ToolSep $ml={5} />
    </Toolbar>
  </>
);

export default function App() {
  return (
    <Page>
      <Global />
      <TitleBar>
        <Svg width="16" height="14" viewBox="0 0 16 14" $c="#2a7fc8" $sw={1.4} $mt={-2}>
          <circle cx="10" cy="5" r="3.6" /><path d="M7 8 L2 12" /><path d="M0 13.5 H15" stroke="#0a5aa8" />
        </Svg>
        <TitleText>{'[ Agilent INTERNAL USE ONLY!!! ] オンライン ICP-MS データ解析 - 7900_FQ_QSScan_Demo.b - 7900_FQ_QSScan_Demo'}</TitleText>
        <WinControls>
          <WinBtn>?</WinBtn><WinBtn>–</WinBtn>
          <WinBtn>
            <CenterCell><Svg width="10" height="11" viewBox="0 0 10 11" $c="#555" $sw={1}><path d="M3 3 V1 H9 V7 H7 M1 3 H7 V10 H1 Z M1 4.5 H7" /></Svg></CenterCell>
          </WinBtn>
          <WinBtn>X</WinBtn>
        </WinControls>
      </TitleBar>

      <TabRow>
        <RibbonTab $w={118} $file>ファイル</RibbonTab>
        <RibbonTab $w={121} $active>ホーム</RibbonTab>
        <RibbonTab $w={121}>表示</RibbonTab>
        <RibbonTab $w={121}>レポート</RibbonTab>
        <RibbonTab $w={121}>ツール</RibbonTab>
      </TabRow>

      <Ribbon>
        <RibbonGroup $w={235} $ml={15}>
          <RibbonItems>
            <RibbonBtn $w={50}><IconSlot><Folder /></IconSlot><BtnText>開く</BtnText><Chev mt={7} /></RibbonBtn>
            <RibbonBtn $w={50}><IconSlot><Floppy /></IconSlot><BtnText>保存</BtnText><Chev mt={7} /></RibbonBtn>
            <SmallBtn $ml={3}><ImportIcon />サンプルのインポート<Chev mt={0} ml={6} /></SmallBtn>
          </RibbonItems>
          <RibbonLabel>バッチ</RibbonLabel>
        </RibbonGroup>
        <RibbonGroup $w={266} $ml={15}>
          <RibbonItems>
            <RibbonBtn $w={70} $k={-1.2}><IconSlot><Sync /></IconSlot><BtnText $mt={5}>バッチの処理</BtnText></RibbonBtn>
            <RibbonBtn $w={58}><IconSlot><ListIcon /></IconSlot><BtnText>処理順序</BtnText><Chev mt={7} /></RibbonBtn>
            <RibbonBtn $w={72} $k={-0.6}><IconSlot><Trash /></IconSlot><BtnText>結果の消去</BtnText><Chev mt={7} /></RibbonBtn>
            <RibbonBtn $w={58}><IconSlot><Stars /></IconSlot><BtnText $mt={5}>iQ<br />評価</BtnText></RibbonBtn>
          </RibbonItems>
          <RibbonLabel>バッチオプション</RibbonLabel>
        </RibbonGroup>
        <RibbonGroup $w={330} $ml={15}>
          <RibbonItems>
            <RibbonBtn $w={64}><IconSlot><Pencil /></IconSlot><BtnText $mt={5}>編集</BtnText></RibbonBtn>
            <RibbonBtn $w={50} $off><IconSlot><NewIcon /></IconSlot><BtnText>新規</BtnText><Chev mt={7} c="#aab" /></RibbonBtn>
            <RibbonBtn $w={64}><IconSlot><Sigma /></IconSlot><BtnText $mt={5}>補正式</BtnText></RibbonBtn>
            <SmallBtn $ml={5} $gap={8}><DocPlus />解析メソッドのインポート</SmallBtn>
          </RibbonItems>
          <RibbonLabel>メソッド</RibbonLabel>
        </RibbonGroup>
      </Ribbon>

      <Panel $mx={8} $mt={8}>
        <PanelTop $h={25}>
          <PanelTitle $pl={11} $mt={-4} $k={-0.3}>バッチテーブル：定量</PanelTitle>
          <Controls pr={14} gap={12} mt={4} />
        </PanelTop>
        <ToolRowTable />
        <InnerTabs $h={21} $pl={2}>
          <InnerTab $active $px={6}>定量</InnerTab>
          <InnerTab $px={6}>IntelliQuant [He]</InnerTab>
        </InnerTabs>
        <TableArea>
          <TableClip><BatchTable /></TableClip>
          <VScroll>
            <ScrollArrow $h={38} $w={17}><Svg width="9" height="6" viewBox="0 0 9 6" $c="none"><path d="M0 6 L4.5 0 L9 6 Z" fill="#aaa" /></Svg></ScrollArrow>
            <VThumb />
            <ScrollArrow $h={156} $w={17} $end><Tri c="#aaa" /></ScrollArrow>
          </VScroll>
        </TableArea>
        <HScroll>
          <ScrollArrow $h={17} $w={17}><Svg width="5" height="9" viewBox="0 0 5 9" $c="none"><path d="M5 0 L0 4.5 L5 9 Z" fill="#aaa" /></Svg></ScrollArrow>
          <HThumb />
          <ScrollArrow $h={17} $right><Svg width="5" height="9" viewBox="0 0 5 9" $c="none"><path d="M0 0 L5 4.5 L0 9 Z" fill="#aaa" /></Svg></ScrollArrow>
        </HScroll>
      </Panel>

      <BottomRow>
        <Panel $w={441}>
          <PanelTop $h={25}>
            <PanelTitle $pl={11}>スペクトル</PanelTitle>
            <Controls pr={16} gap={11} mt={5} />
          </PanelTop>
          <Toolbar $h={25} $pl={1}>
            <Grip />
            <ToolBtn $w={20} $ml={2} $dash><Up /></ToolBtn>
            <ToolBtn $w={24} $ml={2}><Down /></ToolBtn>
            <ToolSep $ml={3} />
            <ToolBtn $w={20} $ml={1}><Left /></ToolBtn>
            <ToolBtn $w={20} $ml={6}><Right /></ToolBtn>
            <ToolSep $ml={3} />
            <ToolBtn $w={20} $ml={3}><ChartGlyph variant="a" /></ToolBtn>
            <ToolBtn $w={20} $ml={4}><ChartGlyph variant="b" /></ToolBtn>
            <ToolBtn $w={20} $ml={4} $on><ChartGlyph variant="c" c="#567" /></ToolBtn>
            <ToolSep $ml={4} />
            <ToolLabel $w={67} $ml={5} $k={-1.4}>チューンモード:</ToolLabel>
            <Combo $w={90} $ml={3}>No Gas<ComboArrow><Tri /></ComboArrow></Combo>
            <Grip $ml={11} />
            <ToolBtn $w={20} $ml={2} $on><Diag /></ToolBtn>
            <ToolBtn $w={24} $ml={2}><Updown /></ToolBtn>
            <ToolBtn $w={16} $low><Tri c="#1a8a1a" /></ToolBtn>
          </Toolbar>
          <Toolbar $h={24} $pl={1}>
            <Grip />
            <ToolBtn $w={16} $ml={4}><Svg width="16" height="14" viewBox="0 0 16 14" $c="#1e66b8" $sw={1}><rect x=".5" y=".5" width="15" height="13" fill="#d6e8f8" /><path d="M2 11 V8 M5 11 V6 M8 11 V7 M11 11 V4 M1 12 H15 M2 7 L14 2" /></Svg></ToolBtn>
            <ToolBtn $w={18} $ml={7}><ChartGlyph variant="d" c="#999" /></ToolBtn>
            <ToolBtn $w={16} $ml={6}><Svg width="16" height="14" viewBox="0 0 16 14" $c="#1e4f90" $sw={1}><rect x=".5" y=".5" width="15" height="13" fill="#4f7fb8" /><path d="M1 4 H15 M1 8 H15 M1 11 H15" stroke="#dfe8f2" /><path d="M3 12 Q6 3 15 1" stroke="#d33" /></Svg></ToolBtn>
            <ToolSep $ml={7} />
            <ToolBtn $w={16} $ml={3}><Svg width="17" height="13" viewBox="0 0 17 13" $c="#c96a20" $sw={1}><path d="M1 2 Q5 0 8 3 Q12 0 16 2 L14 11 Q9 13 5 11 Z" fill="#f3c9a0" /><path d="M6 4 L9 9 L11 4" stroke="#fff" /></Svg></ToolBtn>
            <ToolLabel $w={80} $ml={1} $k={-1}>元素テンプレート</ToolLabel>
          </Toolbar>
          <SpectrumFrame>
            <SpecInfo><Tight $k={-1.3}>チューンモード</Tight>{'   =   No Gas : 010SMPL.d'}</SpecInfo>
            <SpecSelect>---<Svg width="9" height="5" viewBox="0 0 9 5" $c="#777" $sw={1}><path d="M.5 .5 L4.5 4.5 L8.5 .5" /></Svg></SpecSelect>
            <SpectrumPlot />
          </SpectrumFrame>
        </Panel>

        <Panel $w={656}>
          <PanelTop $h={25}>
            <PanelTitle $pl={14} $c="#666">{'検量線 -   1 / ( 4ページ)'}</PanelTitle>
            <Controls pr={16} gap={14} mt={5} />
          </PanelTop>
          <Toolbar $h={24} $pl={3}>
            <Grip />
            <ToolBtn $w={20} $ml={2}><Up /></ToolBtn>
            <ToolBtn $w={20} $ml={3}><Down /></ToolBtn>
            <ToolSep $ml={4} />
            <ToolBtn $w={20} $ml={3}><Left c="#aaa" /></ToolBtn>
            <ToolBtn $w={20} $ml={5}><Right /></ToolBtn>
            <ToolSep $ml={1} />
            <ToolBtn $w={20} $ml={5} $on><ChartGlyph variant="d" c="#4a7fb0" /></ToolBtn>
            <ToolBtn $w={14} $ml={6}><GridIcon c="#bbb" /></ToolBtn>
            <ToolSep $ml={8} />
            <ToolBtn $w={16} $ml={4}><Svg width="15" height="17" viewBox="0 0 15 17" $c="#1e5a9a" $sw={1}><rect x="1" y="4" width="10" height="12" fill="#2f6fb4" /><path d="M3 13 L9 7" stroke="#fff" /><circle cx="12" cy="4" r="3" fill="#ef9a1e" stroke="none" /></Svg></ToolBtn>
            <Grip $ml={19} />
            <ToolBtn $w={21} $ml={2} $on><Diag /></ToolBtn>
            <ToolBtn $w={22} $ml={2}><Updown /></ToolBtn>
            <ToolBtn $w={20} $ml={3}><Updown dir="v" /></ToolBtn>
          </Toolbar>
          <Toolbar $h={22} $pl={3}>
            <Grip />
            <ToolLabel $w={40} $ml={4}>検量線:</ToolLabel>
            <Combo $w={65} $ml={1}>一次式<ComboArrow $split><Tri c="#aaa" /></ComboArrow></Combo>
            <ToolLabel $w={28} $ml={2}>原点:</ToolLabel>
            <Combo $w={105} $ml={3} $k={-0.6}>ブランク強制通過<ComboArrow $split><Tri c="#aaa" /></ComboArrow></Combo>
            <ToolLabel $w={48} $ml={4} $k={-0.3}>重み付け:</ToolLabel>
            <Combo $w={64} $ml={2}>{'<なし>'}<ComboArrow $split><Tri c="#aaa" /></ComboArrow></Combo>
            <ToolLabel $w={40} $ml={3} $off>内標準:</ToolLabel>
            <Combo $w={65} $ml={2} $off>45<ComboArrow $split><Tri c="#aaa" /></ComboArrow></Combo>
          </Toolbar>
          <ChartsGrid>
            {charts.map((c, i) => (
              <ChartCell key={c.t} $pink={c.pink}>
                <ChartTitle>{c.t}</ChartTitle>
                <MiniChart c={c} i={i} />
              </ChartCell>
            ))}
          </ChartsGrid>
        </Panel>

        <Panel>
          <PanelTop $h={25}>
            <PanelTitle $pl={15} $mt={4}>IntelliQuant [He]</PanelTitle>
            <Controls pr={16} gap={13} mt={5} />
          </PanelTop>
          <Toolbar $h={25} $pl={2}>
            <Grip />
            <ToolBtn $w={24}><Up /></ToolBtn>
            <ToolBtn $w={24}><Down /></ToolBtn>
          </Toolbar>
          <InnerTabs $h={21} $pl={2}>
            <InnerTab $active $px={6} $k={-0.4}>iQ スクリーニング</InnerTab>
          </InnerTabs>
          <PTBody>
            <PeriodicTable />
            <Side>
              <SideHead $mt={8} $fs={16}>K</SideHead>
              <SideText $mt={8} $u>IntelliQuant 濃度</SideText>
              <SideText $mt={8}>2725.690 ppb</SideText>
              <SideHead $mt={14}>総マトリックス固形分</SideHead>
              <SideText $mt={8}>58.738 ppm</SideText>
              <Legend>
                <LegendRow><Swatch $bg={C.a} />&gt; 100 ppm</LegendRow>
                <LegendRow><Swatch $bg={C.b} />1 ppm - 100 ppm</LegendRow>
                <LegendRow><Swatch $bg={C.c} />10 ppb - 1 ppm</LegendRow>
                <LegendRow><Swatch $bg={C.d} />&lt; 10 ppb</LegendRow>
                <LegendRow><Swatch $bg={C.e} />&lt; DL</LegendRow>
              </Legend>
            </Side>
          </PTBody>
        </Panel>
      </BottomRow>

      <StatusBar>
        <StatusCell $w={88} $pl={11} $sep>オンライン</StatusCell>
        <StatusCell $w={79} $sep />
        <StatusCell $w={80} $ml={1458} $sl>Sample 3</StatusCell>
        <StatusCell $w={85} $sl>{'39  K  [ He ]'}</StatusCell>
        <StatusCell $w={120} $sl>19 サンプル (合計 19)</StatusCell>
      </StatusBar>
      <BottomStrip />
    </Page>
  );
}
